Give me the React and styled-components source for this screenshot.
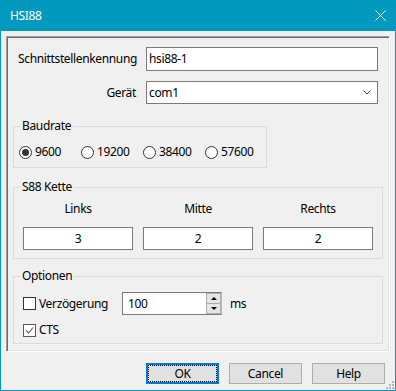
import React from "react";
import styled, { createGlobalStyle } from "styled-components";

const GlobalStyle = createGlobalStyle`
	html, body {
		margin: 0;
		padding: 0;
		background: #f0f0f0;
	}
	body {
		font-family: "Noto Sans", "Open Sans", sans-serif;
		font-size: 12px;
		letter-spacing: -0.35px;
		color: #000;
	}
`;

const Window = styled.div`
	width: 396px;
	height: 391px;
	box-sizing: border-box;
	border: 1px solid #0199bd;
	border-top: none;
	background: #f0f0f0;
	display: flex;
	flex-direction: column;
	position: relative;
`;

const TitleBar = styled.div`
	height: 31px;
	margin: 0 -1px;
	background: #0199bd;
	color: #fff;
	display: flex;
	align-items: center;
	justify-content: space-between;
	padding: 0 10px;
	font-size: 12px;
`;

const CloseIcon = styled.svg`
	width: 11px;
	height: 11px;
`;

const Body = styled.div`
	flex: 1;
	display: flex;
	flex-direction: column;
	padding: 5px 5px 6px;
`;

const Panel = styled.div`
	height: 316px;
	box-sizing: border-box;
	border: 1px solid;
	border-color: #a0a0a0 #ffffff #ffffff #a0a0a0;
	box-shadow: inset 1px 1px 0 #696969, inset -1px -1px 0 #e3e3e3;
	padding: 10px 6px 0;
	display: flex;
	flex-direction: column;
`;

const FormGrid = styled.div`
	display: grid;
	grid-template-columns: 118px 1fr;
	column-gap: 10px;
	row-gap: 10px;
	padding: 0 5px;
	align-items: center;
`;

const FieldLabel = styled.label`
	text-align: ${p => (p.right ? "right" : "left")};
	white-space: nowrap;
	line-height: 16px;
`;

const TextBox = styled.div`
	height: ${p => p.h || 23}px;
	box-sizing: border-box;
	border: 1px solid #7a7a7a;
	background: #fff;
	display: flex;
	align-items: center;
	justify-content: ${p => (p.center ? "center" : "space-between")};
	padding: 0 6px 0 2px;
	line-height: 16px;
	${p => p.center && "padding: 0;"}
`;

const Group = styled.fieldset`
	margin: ${p => p.top}px 0 0;
	width: ${p => p.w || 370}px;
	box-sizing: border-box;
	border: 1px solid #dcdcdc;
	border-radius: 0;
	padding: ${p => p.pt}px 5px ${p => p.pb}px;
	min-inline-size: 0;
`;

const Legend = styled.legend`
	padding: 0 2px;
	margin-left: 1px;
	line-height: 16px;
`;

const RadioRow = styled.div`
	display: flex;
	height: 16px;
	align-items: center;
`;

const RadioItem = styled.label`
	width: 62px;
	flex-shrink: 0;
	display: flex;
	align-items: center;
	gap: 3px;
	line-height: 16px;
`;

const RadioCircle = styled.span`
	width: 13px;
	height: 13px;
	box-sizing: border-box;
	border-radius: 50%;
	border: 1px solid #333;
	background: #fff;
	display: flex;
	align-items: center;
	justify-content: center;
	&::after {
		content: "";
		width: 7px;
		height: 7px;
		border-radius: 50%;
		background: ${p => (p.checked ? "#333" : "transparent")};
	}
`;

const ChainGrid = styled.div`
	display: grid;
	grid-template-columns: repeat(3, 110px);
	column-gap: 10px;
	row-gap: 10px;
	padding: 0 4px;
`;

const ColLabel = styled.div`
	text-align: center;
	line-height: 16px;
`;

const OptionRow = styled.div`
	display: flex;
	align-items: center;
	height: ${p => p.h}px;
	margin-top: ${p => p.top || 0}px;
	padding-left: 4px;
`;

const CheckLabel = styled.label`
	display: flex;
	align-items: center;
	gap: 3px;
	width: ${p => (p.w ? `${p.w}px` : "auto")};
	flex-shrink: 0;
	line-height: 16px;
`;

const CheckBox = styled.span`
	width: 13px;
	height: 13px;
	box-sizing: border-box;
	border: 1px solid ${p => (p.checked ? "#5a5a5a" : "#333")};
	background: #fff;
	display: flex;
	align-items: center;
	justify-content: center;
`;

const SpinBox = styled.div`
	width: 100px;
	height: 23px;
	box-sizing: border-box;
	border: 1px solid #7a7a7a;
	border-right-color: #bcbcbc;
	background: #fff;
	display: flex;
`;

const SpinText = styled.div`
	flex: 1;
	padding-left: 5px;
	display: flex;
	align-items: center;
	line-height: 16px;
`;

const SpinButtons = styled.div`
	width: 15px;
	display: flex;
	flex-direction: column;
`;

const SpinButton = styled.div`
	flex: 1;
	box-sizing: border-box;
	background: #e6e6e6;
	border: 1px solid #adadad;
	${p => p.down && "border-top: none;"}
	display: flex;
	align-items: center;
	justify-content: center;
	&::after {
		content: "";
		border-left: 3px solid transparent;
		border-right: 3px solid transparent;
		${p =>
			p.down
				? "border-top: 3px solid #000;"
				: "border-bottom: 3px solid #000;"}
	}
`;

const Unit = styled.span`
	margin-left: 8px;
	line-height: 16px;
`;

const ButtonRow = styled.div`
	display: flex;
	justify-content: flex-end;
	gap: 10px;
	margin-top: 11px;
	padding-right: 5px;
`;

const Button = styled.button`
	width: 73px;
	height: 21px;
	box-sizing: border-box;
	background: #e1e1e1;
	border: ${p => (p.primary ? "2px solid #0078d7" : "1px solid #adadad")};
	font-family: inherit;
	font-size: 12px;
	letter-spacing: inherit;
	color: #000;
	padding: 0;
	${p =>
		p.primary &&
		"outline: 1px dotted #000; outline-offset: -3px;"}
`;

const Grip = styled.svg`
	position: absolute;
	right: 1px;
	bottom: 1px;
	width: 10px;
	height: 10px;
`;

function Radio({ label, checked }) {
	return (
		<RadioItem>
			<RadioCircle checked={checked} />
			{label}
		</RadioItem>
	);
}

function Check({ label, checked, w }) {
	return (
		<CheckLabel w={w}>
			<CheckBox checked={checked}>
				{checked && (
					<svg width="9" height="9" viewBox="0 0 9 9">
						<path d="M1 4.5 L3.5 7 L8 1.5" fill="none" stroke="#5a5a5a" strokeWidth="1.1" />
					</svg>
				)}
			</CheckBox>
			{label}
		</CheckLabel>
	);
}

export default function App() {
	const rates = ["9600", "19200", "38400", "57600"];
	return (
		<>
			<GlobalStyle />
			<Window>
				<TitleBar>
					<span>HSI88</span>
					<CloseIcon viewBox="0 0 11 11">
						<path d="M0.5 0.5 L10.5 10.5 M10.5 0.5 L0.5 10.5" stroke="#fff" strokeWidth="1" />
					</CloseIcon>
				</TitleBar>
				<Body>
					<Panel>
						<FormGrid>
							<FieldLabel>Schnittstellenkennung</FieldLabel>
							<TextBox h={24}>hsi88-1</TextBox>
							<FieldLabel right>Gerät</FieldLabel>
							<TextBox>
								com1
								<svg width="8" height="5" viewBox="0 0 8 5">
									<path d="M0.5 0.5 L4 4 L7.5 0.5" fill="none" stroke="#444" strokeWidth="1" />
								</svg>
							</TextBox>
						</FormGrid>

						<Group top={14} w={254} pt={10} pb={7}>
							<Legend>Baudrate</Legend>
							<RadioRow>
								{rates.map((r, i) => (
									<Radio key={r} label={r} checked={i === 0} />
								))}
							</RadioRow>
						</Group>

						<Group top={11} pt={6} pb={8}>
							<Legend>S88 Kette</Legend>
							<ChainGrid>
								<ColLabel>Links</ColLabel>
								<ColLabel>Mitte</ColLabel>
								<ColLabel>Rechts</ColLabel>
								<TextBox center>3</TextBox>
								<TextBox center>2</TextBox>
								<TextBox center>2</TextBox>
							</ChainGrid>
						</Group>

						<Group top={9} pt={8} pb={5}>
							<Legend>Optionen</Legend>
							<OptionRow h={23}>
								<Check label="Verzögerung" w={99} />
								<SpinBox>
									<SpinText>100</SpinText>
									<SpinButtons>
										<SpinButton />
										<SpinButton down />
									</SpinButtons>
								</SpinBox>
								<Unit>ms</Unit>
							</OptionRow>
							<OptionRow h={16} top={7}>
								<Check label="CTS" checked />
							</OptionRow>
						</Group>
					</Panel>
					<ButtonRow>
						<Button primary>OK</Button>
						<Button>Cancel</Button>
						<Button>Help</Button>
					</ButtonRow>
				</Body>
				<Grip viewBox="0 0 10 10">
					{[
						[8, 2],
						[8, 5],
						[5, 5],
						[8, 8],
						[5, 8],
						[2, 8],
					].map(([x, y]) => (
						<rect key={`${x}-${y}`} x={x} y={y} width="2" height="2" fill="#b8b8b8" />
					))}
				</Grip>
			</Window>
		</>
	);
}
